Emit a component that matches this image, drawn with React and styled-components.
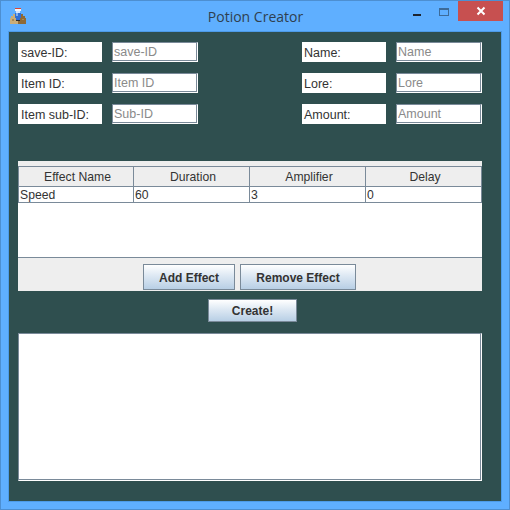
import React from "react";
import styled, { createGlobalStyle } from "styled-components";

const GlobalStyle = createGlobalStyle`
  html, body {
    margin: 0;
    padding: 0;
    background: #5fafff;
  }
  * {
    box-sizing: border-box;
  }
`;

const Frame = styled.div`
  width: 510px;
  height: 510px;
  display: flex;
  flex-direction: column;
  background: #5fafff;
  border: 1px solid #4d8fd1;
  padding: 0 7px 7px;
  font-family: "Liberation Sans", Arial, sans-serif;
  font-size: 12.2px;
  color: #333333;
`;

const TitleBar = styled.div`
  height: 30px;
  margin: 0 -1px 0 0;
  position: relative;
  display: flex;
  align-items: center;
  justify-content: center;
  flex: none;
`;

const TitleIcon = styled.svg`
  position: absolute;
  left: 2px;
  top: 7px;
  width: 16px;
  height: 16px;
`;

const TitleText = styled.div`
  font-family: "Open Sans", "Noto Sans", sans-serif;
  font-size: 14px;
  color: #2f3f4f;
  margin-top: 1px;
`;

const WindowControls = styled.div`
  position: absolute;
  right: 0;
  top: 0;
  height: 20px;
  display: flex;
`;

const ControlSlot = styled.div`
  width: ${(p) => p.$width}px;
  height: 20px;
  display: flex;
  align-items: center;
  justify-content: center;
  background: ${(p) => p.$bg || "transparent"};
`;

const Content = styled.div`
  flex: 1;
  display: flex;
  flex-direction: column;
  background: #2f4f4f;
  border: 1px solid #4d9be8;
  padding: 10px 19px 20px 9px;
`;

const FormRows = styled.div`
  display: flex;
  flex-direction: column;
  gap: 11px;
`;

const FormRow = styled.div`
  display: flex;
  justify-content: space-between;
`;

const Field = styled.div`
  display: flex;
  gap: 10px;
`;

const Label = styled.div`
  width: 84px;
  height: 20px;
  background: #ffffff;
  padding: 4px 0 0 ${(p) => p.$indent}px;
  line-height: 15px;
  font-size: 12.5px;
`;

const Input = styled.input`
  width: 86px;
  height: 20px;
  border: 1px solid #ffffff;
  border-top-color: #7a8a99;
  border-left-color: #7a8a99;
  box-shadow: inset -1px -1px 0 #7a8a99, inset 1px 1px 0 #ffffff;
  padding: 0 2px 0 1px;
  font-family: inherit;
  font-size: 12.5px;
  outline: none;
  &::placeholder {
    color: #8a8a8a;
    opacity: 1;
  }
`;

const TablePanel = styled.div`
  margin-top: 37px;
  height: 130px;
  display: flex;
  flex-direction: column;
  background: #eeeeee;
  padding-top: 5px;
`;

const TableGrid = styled.div`
  display: grid;
  grid-template-columns: repeat(4, 116px);
`;

const HeaderCell = styled.div`
  height: 21px;
  background: #eeeeee;
  border-top: 1px solid #7a8a99;
  border-bottom: 1px solid #7a8a99;
  border-right: 1px solid #7a8a99;
  border-left: ${(p) => (p.$first ? "1px solid #7a8a99" : "none")};
  text-align: center;
  line-height: 20px;
  padding-left: 3px;
`;

const BodyCell = styled.div`
  height: 16px;
  background: #ffffff;
  border-bottom: 1px solid #7a8a99;
  border-right: 1px solid #7a8a99;
  border-left: ${(p) => (p.$first ? "1px solid #7a8a99" : "none")};
  padding-left: 1px;
  line-height: 16px;
`;

const TableViewport = styled.div`
  height: 55px;
  background: #ffffff;
  border-bottom: 1px solid #7a8a99;
`;

const ButtonBar = styled.div`
  flex: 1;
  display: flex;
  gap: 5px;
  padding: 6px 0 0 125px;
`;

const Button = styled.button`
  width: ${(p) => p.$width}px;
  height: ${(p) => p.$height}px;
  border: 1px solid #7a8a99;
  background: linear-gradient(#ffffff, #dde8f3 45%, #b8cfe5);
  font-family: inherit;
  font-size: 12px;
  font-weight: bold;
  color: #333333;
  padding: ${(p) => p.$nudge || 0}px 0 0;
`;

const CreateRow = styled.div`
  display: flex;
  justify-content: center;
  margin: 8px 0 11px;
  padding-left: 5px;
`;

const OutputArea = styled.div`
  height: 148px;
  background: #ffffff;
  border: 1px solid #ffffff;
  border-top-color: #7a8a99;
  border-left-color: #7a8a99;
  box-shadow: inset -1px -1px 0 #7a8a99;
`;

const leftFields = [
  ["save-ID:", "save-ID"],
  ["Item ID:", "Item ID"],
  ["Item sub-ID:", "Sub-ID"],
];
const rightFields = [
  ["Name:", "Name"],
  ["Lore:", "Lore"],
  ["Amount:", "Amount"],
];
const columns = ["Effect Name", "Duration", "Amplifier", "Delay"];
const effect = ["Speed", "60", "3", "0"];

function PotionIcon() {
  return (
    <TitleIcon viewBox="0 0 16 16" shapeRendering="crispEdges">
      <path fill="#c9ad78" d="M0 10h1V8h2V6h2v3h1v4h2v3H0z" />
      <path fill="#8f6a35" d="M10 9h1V6h2v2h2v2h1v6H8v-3h2z" />
      <path fill="#a88a55" d="M2 11h2v2H2zM12 11h2v1h-2z" />
      <path fill="#d8453a" d="M5 0h6v1H5z" />
      <path fill="#f4f4f4" d="M5 1h6v2H5z" />
      <path fill="#cfe4ff" d="M6 3h4v2H6z" />
      <path fill="#2f6fd6" d="M5 5h6v5h-1v2H6v-2H5z" />
      <path fill="#7fb0f0" d="M6 5h2v3H6z" />
      <path fill="#2b2b2b" d="M6 12h4v1H6z" />
    </TitleIcon>
  );
}

export default function App() {
  return (
    <>
      <GlobalStyle />
      <Frame>
        <TitleBar>
          <PotionIcon />
          <TitleText>Potion Creator</TitleText>
          <WindowControls>
            <ControlSlot $width={30}>
              <svg width="10" height="12" viewBox="0 0 10 12">
                <rect x="1" y="9" width="8" height="2" fill="#1c2430" />
              </svg>
            </ControlSlot>
            <ControlSlot $width={26}>
              <svg width="12" height="14" viewBox="0 0 12 14">
                <rect x="0.5" y="4.5" width="9" height="7" fill="none" stroke="#3d6b99" />
                <rect x="0" y="4" width="10" height="2" fill="#3d6b99" />
              </svg>
            </ControlSlot>
            <ControlSlot $width={45} $bg="#c75050">
              <svg width="10" height="10" viewBox="0 0 10 10">
                <path d="M1.5 1.5l7 7M8.5 1.5l-7 7" stroke="#ffffff" strokeWidth="2" />
              </svg>
            </ControlSlot>
          </WindowControls>
        </TitleBar>
        <Content>
          <FormRows>
            {leftFields.map(([label, hint], i) => (
              <FormRow key={label}>
                <Field>
                  <Label $indent={3}>{label}</Label>
                  <Input placeholder={hint} readOnly />
                </Field>
                <Field>
                  <Label $indent={2}>{rightFields[i][0]}</Label>
                  <Input placeholder={rightFields[i][1]} readOnly />
                </Field>
              </FormRow>
            ))}
          </FormRows>
          <TablePanel>
            <TableGrid>
              {columns.map((name, i) => (
                <HeaderCell key={name} $first={i === 0}>
                  {name}
                </HeaderCell>
              ))}
              {effect.map((value, i) => (
                <BodyCell key={i} $first={i === 0}>
                  {value}
                </BodyCell>
              ))}
            </TableGrid>
            <TableViewport />
            <ButtonBar>
              <Button $width={92} $height={26} $nudge={2}>
                Add Effect
              </Button>
              <Button $width={116} $height={26} $nudge={2}>
                Remove Effect
              </Button>
            </ButtonBar>
          </TablePanel>
          <CreateRow>
            <Button $width={89} $height={23}>
              Create!
            </Button>
          </CreateRow>
          <OutputArea />
        </Content>
      </Frame>
    </>
  );
}
